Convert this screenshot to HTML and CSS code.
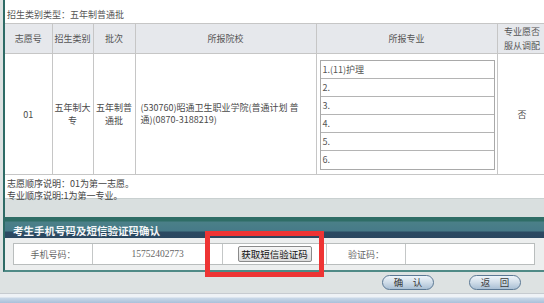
FILE: index.html
```html
<!DOCTYPE html>
<html lang="zh-CN">
<head>
<meta charset="utf-8">
<title>志愿确认</title>
<link rel="stylesheet" href="styles.css">
</head>
<body>
<div class="frame">
  <div class="top">
    <div class="type">招生类别类型：五年制普通批</div>
    <table class="vol">
      <colgroup>
        <col class="c1"><col class="c2"><col class="c3"><col class="c4"><col class="c5"><col class="c6">
      </colgroup>
      <thead>
        <tr>
          <th>志愿号</th>
          <th>招生类别</th>
          <th>批次</th>
          <th>所报院校</th>
          <th>所报专业</th>
          <th class="adj">专业愿否<br>服从调配</th>
        </tr>
      </thead>
      <tbody>
        <tr>
          <td>01</td>
          <td class="narrow">五年制大专</td>
          <td class="narrow">五年制普通批</td>
          <td class="school">(530760)昭通卫生职业学院(普通计划 普<br>通)(0870-3188219)</td>
          <td class="majcell">
            <div class="majors">
              <div class="maj">1.(11)护理</div>
              <div class="maj">2.</div>
              <div class="maj">3.</div>
              <div class="maj">4.</div>
              <div class="maj">5.</div>
              <div class="maj">6.</div>
            </div>
          </td>
          <td>否</td>
        </tr>
      </tbody>
    </table>
    <div class="notes">
      <div>志愿顺序说明：01为第一志愿。</div>
      <div>专业顺序说明:1为第一专业。</div>
    </div>
  </div>
  <div class="gap"></div>
  <div class="sec-head">考生手机号码及短信验证码确认</div>
  <div class="panel">
    <div class="phone-row">
      <div class="cell lbl1">手机号码：</div>
      <div class="cell num">15752402773</div>
      <div class="cell btncell"><button class="sms" type="button">获取短信验证码</button></div>
      <div class="cell lbl2">验证码：</div>
      <div class="cell inp"></div>
    </div>
    <div class="highlight"></div>
  </div>
</div>
<div class="actions">
  <button class="pill" type="button">确　认</button>
  <button class="pill" type="button">返　回</button>
</div>
<div class="strip"></div>
</body>
</html>
```

FILE: styles.css
```css
html, body {
  margin: 0;
  padding: 0;
  overflow: hidden;
  width: 544px;
  height: 303px;
  background: #dde2e2;
  font-family: "Noto Sans CJK SC", "Liberation Serif", sans-serif;
  font-size: 9px;
  color: #4a4a4a;
}

.frame {
  position: relative;
  margin-left: 3px;
  width: 560px;
  border-left: 2px solid #2e6b66;
  border-bottom: 2px solid #4f8a86;
}

.top {
  background: #ffffff;
  height: 198px;
  border-bottom: 1px solid #c9d0d0;
}

.type {
  height: 23px;
  box-sizing: border-box;
  padding: 9px 0 0 2px;
  line-height: 12px;
  color: #555;
}

.vol {
  border-collapse: collapse;
  table-layout: fixed;
  width: 542px;
}

.vol col.c1 { width: 47px; }
.vol col.c2 { width: 41px; }
.vol col.c3 { width: 42px; }
.vol col.c4 { width: 181px; }
.vol col.c5 { width: 181px; }
.vol col.c6 { width: 50px; }

.vol th, .vol td {
  border: 1px solid #c6c6c6;
  padding: 0;
  text-align: center;
  vertical-align: middle;
  font-weight: normal;
}

.vol tr:first-child th:first-child,
.vol tr:first-child td:first-child {
  border-left: none;
}

.vol thead th {
  background: #e6e8ec;
  height: 29px;
  line-height: 14px;
  color: #555;
}

.vol tbody td {
  height: 115px;
  line-height: 13px;
  color: #4a4a4a;
}

.vol td.narrow {
  padding: 0 1px;
  word-break: break-all;
}

.vol td.school {
  text-align: left;
  padding: 0 2px 0 5px;
  line-height: 12px;
  white-space: nowrap;
  overflow: hidden;
}

.vol td.majcell {
  padding: 3px 2px 2px 3px;
}

.majors {
  border: 1px solid #a9a9a9;
  text-align: left;
}

.maj {
  height: 18px;
  box-sizing: border-box;
  border-bottom: 1px solid #b4b4b4;
  padding-left: 2px;
  line-height: 17px;
  color: #555;
}

.maj:last-child {
  border-bottom: none;
}

.notes {
  padding: 3px 0 0 2px;
  line-height: 12px;
  color: #444;
}

.gap {
  height: 18px;
  background: #d9dfdf;
}

.sec-head {
  height: 21px;
  box-sizing: border-box;
  padding: 8px 0 0 8px;
  background: linear-gradient(to bottom, #2f6d66 0, #2f6d66 4px, #4b8088 5px, #467a88 14px, #2b4a62 15px, #2a4760 21px);
  color: #f4f6f8;
  font-weight: bold;
  font-size: 10.5px;
  line-height: 11px;
}

.panel {
  position: relative;
  height: 32px;
  box-sizing: border-box;
  padding: 5px 0 0 8px;
  background: #eceeee;
}

.phone-row {
  display: flex;
  width: 522px;
  height: 22px;
  box-sizing: border-box;
  border: 1px solid #b9bdbd;
  background: #ffffff;
}

.cell {
  display: flex;
  align-items: center;
  justify-content: center;
  box-sizing: border-box;
  border-right: 1px solid #c4c7c7;
  color: #666;
}

.lbl1 { width: 79px; }
.num { width: 130px; font-family: "Liberation Serif", serif; font-size: 9.5px; }
.btncell { width: 104px; }
.lbl2 { width: 79px; }
.inp { flex: 1; border-right: none; }

.sms {
  width: 74px;
  height: 16px;
  padding: 0;
  border: 1px solid #8a8a8a;
  border-radius: 2px;
  background: linear-gradient(to bottom, #f6f6f6, #dcdcdc);
  font-family: "Noto Sans CJK SC", sans-serif;
  font-size: 9.5px;
  line-height: 14px;
  color: #111;
}

.highlight {
  position: absolute;
  left: 200px;
  top: -7px;
  width: 119px;
  height: 46px;
  box-sizing: border-box;
  border: 5px solid #ee3434;
}

.actions {
  height: 21px;
  box-sizing: border-box;
  padding-top: 3px;
  display: flex;
  justify-content: flex-end;
  gap: 35px;
  padding-right: 23px;
}

.pill {
  width: 52px;
  height: 15px;
  padding: 0;
  border: 1px solid #5b7894;
  border-radius: 8px;
  background: linear-gradient(to bottom, #eef4fa 0%, #cfdce8 50%, #a9bfd4 100%);
  font-family: "Noto Sans CJK SC", sans-serif;
  font-size: 9.5px;
  line-height: 13px;
  color: #3a3a3a;
}

.strip {
  height: 10px;
  background: linear-gradient(to bottom, #c6cbd0 0, #c6cbd0 1px, #eef2f6 1px, #eef2f6 4px, #c9d8e8 5px, #a9c0da 10px);
}
```
